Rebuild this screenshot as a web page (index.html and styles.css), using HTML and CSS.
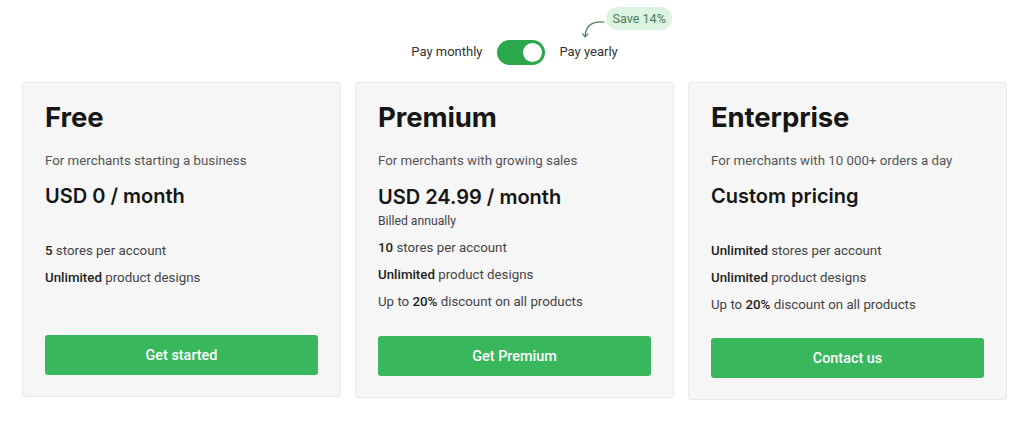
FILE: index.html
```html
<!DOCTYPE html>
<html lang="en">
<head>
<meta charset="utf-8">
<title>Pricing</title>
<link rel="stylesheet" href="styles.css">
</head>
<body>
<div class="page">
  <div class="billing">
    <span class="billing__label">Pay monthly</span>
    <span class="toggle"><span class="toggle__knob"></span></span>
    <span class="billing__label billing__label--yearly">Pay yearly
      <svg class="badge-arrow" width="26" height="24" viewBox="0 0 26 24" aria-hidden="true">
        <path d="M23 6 C 13 5, 5 8, 4 20" fill="none" stroke="#4d7d5a" stroke-width="1.2" stroke-linecap="round"/>
        <path d="M1.5 17.5 L4 21 L6.8 17.8" fill="none" stroke="#4d7d5a" stroke-width="1.2" stroke-linecap="round" stroke-linejoin="round"/>
      </svg>
      <span class="badge">Save 14%</span>
    </span>
  </div>

  <div class="plans">
    <section class="card">
      <h2 class="card__title">Free</h2>
      <p class="card__desc">For merchants starting a business</p>
      <div class="price">USD 0 / month</div>
      <ul class="features">
        <li><b>5</b> stores per account</li>
        <li><b>Unlimited</b> product designs</li>
      </ul>
      <a class="btn">Get started</a>
    </section>

    <section class="card">
      <h2 class="card__title">Premium</h2>
      <p class="card__desc">For merchants with growing sales</p>
      <div class="price price--billed">USD 24.99 / month</div>
      <div class="billed">Billed annually</div>
      <ul class="features">
        <li><b>10</b> stores per account</li>
        <li><b>Unlimited</b> product designs</li>
        <li>Up to <b>20%</b> discount on all products</li>
      </ul>
      <a class="btn btn--tight">Get Premium</a>
    </section>

    <section class="card">
      <h2 class="card__title">Enterprise</h2>
      <p class="card__desc">For merchants with 10 000+ orders a day</p>
      <div class="price">Custom pricing</div>
      <ul class="features">
        <li><b>Unlimited</b> stores per account</li>
        <li><b>Unlimited</b> product designs</li>
        <li>Up to <b>20%</b> discount on all products</li>
      </ul>
      <a class="btn">Contact us</a>
    </section>
  </div>
</div>
</body>
</html>
```

FILE: styles.css
```css
* { box-sizing: border-box; }

html, body {
  margin: 0;
  padding: 0;
  background: #ffffff;
}

body {
  font-family: Roboto, "Liberation Sans", Arial, sans-serif;
  color: #333333;
}

.page {
  padding: 0 17px 0 22px;
}

.billing {
  display: flex;
  align-items: center;
  justify-content: center;
  gap: 15px;
  padding-top: 40px;
  height: 64px;
  margin-bottom: 18px;
  font-size: 13px;
  line-height: 20px;
  color: #333333;
}

.billing__label {
  position: relative;
  white-space: nowrap;
}

.toggle {
  position: relative;
  display: block;
  width: 48px;
  height: 25px;
  border-radius: 13px;
  background: #2aa84b;
  margin-right: -1px;
}

.toggle__knob {
  position: absolute;
  right: 3px;
  top: 3px;
  width: 19px;
  height: 19px;
  border-radius: 50%;
  background: #ffffff;
}

.badge {
  position: absolute;
  left: 47px;
  top: -35px;
  height: 23px;
  padding: 0 6px;
  border-radius: 12px;
  background: #dcf3df;
  color: #4d7d5a;
  font-size: 12.6px;
  line-height: 23px;
  white-space: nowrap;
}

.badge-arrow {
  position: absolute;
  left: 22px;
  top: -26px;
}

.plans {
  display: grid;
  grid-template-columns: repeat(3, 1fr);
  gap: 14px;
  align-items: start;
}

.card {
  display: flex;
  flex-direction: column;
  background: #f6f6f6;
  border: 1px solid #e9e9e9;
  border-radius: 3px;
  padding: 18px 22px 21px 22px;
}

.card__title {
  margin: 0;
  font-family: Inter, "Open Sans", sans-serif;
  font-weight: 700;
  font-size: 27.5px;
  line-height: 32px;
  color: #161616;
  letter-spacing: -0.1px;
}

.card__desc {
  margin: 18px 0 0 0;
  font-size: 13.3px;
  line-height: 20px;
  color: #555555;
}

.price {
  margin: 13px 0 0 0;
  font-family: Inter, "Open Sans", sans-serif;
  font-weight: 600;
  font-size: 20px;
  line-height: 24px;
  color: #161616;
  padding-bottom: 29px;
}

.price--billed {
  margin-top: 14px;
  padding-bottom: 0;
}

.billed {
  margin-top: 4px;
  font-size: 12.2px;
  line-height: 16px;
  color: #444444;
  padding-bottom: 5px;
}

.features {
  list-style: none;
  margin: 0;
  padding: 0;
  min-height: 78px;
  font-size: 13.3px;
  line-height: 27px;
  color: #444444;
}

.features b {
  font-weight: 500;
  color: #222222;
}

.btn {
  display: flex;
  align-items: center;
  justify-content: center;
  height: 40px;
  margin-top: 20px;
  border-radius: 3px;
  background: #38b75d;
  color: #ffffff;
  font-size: 14.4px;
  font-weight: 500;
  text-decoration: none;
}

.btn--tight {
  margin-top: 21px;
}
```
